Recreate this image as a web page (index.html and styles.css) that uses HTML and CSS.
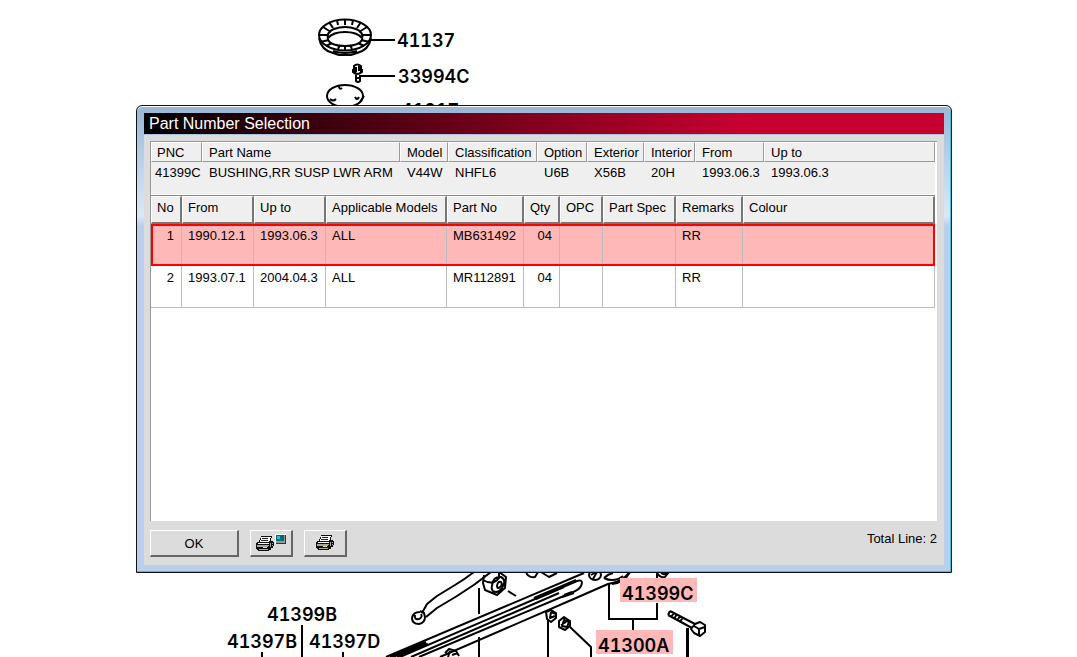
FILE: index.html
```html
<!DOCTYPE html>
<html lang="en">
<head>
<meta charset="utf-8">
<title>Part Number Selection</title>
<link rel="stylesheet" href="styles.css">
</head>
<body>
<svg class="diagram" width="1077" height="657" viewBox="0 0 1077 657" aria-label="Suspension parts diagram">
  <g class="ink">
    <!-- slotted ring -->
    <ellipse cx="345" cy="35" rx="26" ry="15.5"/>
    <path d="M328 40q-2-8 6-11 11-4 22 0 8 3 6 11-3 6-17 6t-17-6"/>
    <path d="M328 38q5-6 17-6t17 6M319 38q2 12 14 15l6 2h12l6-2q12-3 14-15M333 51q12 4 24 0"/>
    <path d="M345 20v5M337 20l1 5M353 20l-1 5M329 22l4 6M361 22l-4 6M323 27l8 5M367 27l-8 5M319 35h8M371 35h-8M320 42l9-2M370 42l-9-2M326 46l6-3M364 46l-6-3M338 49l2-4M352 49l-2-4M345 50v-4"/>
    <path class="fine" d="M371 40h24M360 76h35"/>
    <!-- screw -->
    <path d="M354 66q3-3 7 0v6q-3 4-7 0zM353 69v3q4 4 9 0v-3M356 75v6q2 2 4 0v-6M356 78h3M356 67v5M359 66v5"/>
    <!-- cover plate -->
    <ellipse cx="345" cy="96" rx="18" ry="11"/>
    <path d="M339 86q0 4 3 2M330 99q3 3 6 0M355 97q2 4 4 0M360 102l4-6"/>
    <!-- upper arm -->
    <path d="M474 572q-9 7-19 13l-18 11-10 8-5 9M491 572q-16 13-34 24l-20 12-11 9"/>
    <path d="M420 611l4 2 1 4q0 6-6 7-7 0-7-6 1-6 8-6M415 615q-1 5 4 4 4-2 2-5"/>
    <!-- arm bush -->
    <path d="M484 575l-1 8 2 7 12 5 8-7 1-11-7-5M483 580q10 6 16-2v-5M492 586q1-10 9-9 6 3 1 11-4 6-9 3-2-2-1-5M497 587q0-6 4-5 2 3-1 5-2 2-3 0M508 591l8 5"/>
    <path class="fine" d="M479 588v26M479 637v20"/>
    <!-- beam -->
    <path d="M386 657l198-84M400 657l177-76q7-2 4 5-2 4-10 7l-152 64M411 657l148-64M440 657l136-59 32-14q12-2 17-7l5-5M393 657l33-14"/>
    <path d="M390 657l36-15M397 657l30-13M403 654l25-10M534 598l42-18M536 599l28-12M540 596l20-8M562 597l12-4M564 595l8-3"/>
    <path d="M526 572q2 6 9 5l3-5M541 572l8 5 8-4"/>
    <ellipse cx="595" cy="575" rx="6" ry="5"/>
    <path d="M591 575l7-4M593 579l4-7M604 578q4-4 9-5M604 578q10 5 19-2M630 572q-6 11-18 12"/>
    <path d="M657 572q2 6 8 5l4-5M661 573q4 3 6-1"/>
    <!-- nuts -->
    <path d="M546 612l5-2 5 3v5l-5 4-4-3zM551 612l-1 6 5-2M551 612l5 2"/>
    <path d="M559 621l5-4 6 4v5l-5 4-6-3zM564 620l5 2-2 5-5-1zM561 625l5-3"/>
    <path class="fine" d="M548 620v37"/>
    <path d="M570 627l21 20v10"/>
    <path d="M445 653l4-4 7 2 3 5M448 657l2-6M452 655l6-2"/>
    <!-- leader bracket -->
    <path class="fine" d="M609 584v35h48v-16M633 619v12M657 572v7"/>
    <!-- bolt -->
    <path d="M670 611l25 13M668 615l24 13M670 611l-2 4M674 613l-3 4M677 614l-3 5M680 616l-3 5M683 617l-3 5M695 624l5-2 5 3v7l-5 4-6-3-3-4zM705 627l-6 2-5-3M699 629v7"/>
    <path class="lead" d="M687.500 628v29"/>
    <path class="fine" d="M302 625v32M262 652v5M343 652v5"/>
  </g>
  <g class="marks"><rect x="620" y="578" width="77" height="24"/><rect x="596" y="630" width="77" height="24"/></g>
  <g class="codes">
    <text x="397" y="47">41137</text>
    <text x="398" y="83">33994C</text>
    <text x="401" y="117">41217</text>
    <text x="267" y="621">41399B</text>
    <text x="227" y="648">41397B</text>
    <text x="309" y="648">41397D</text>
    <text x="622" y="600">41399C</text>
    <text x="598" y="652">41300A</text>
  </g>
</svg>

<main class="window">
  <div class="frame">
    <h1 class="title">Part Number Selection</h1>
    <div class="body">
      <div class="pane">
        <table class="summary">
          <colgroup><col class="w51"><col class="w198"><col class="w48"><col class="w89"><col class="w50"><col class="w57"><col class="w51"><col class="w69"><col></colgroup>
          <thead><tr><th>PNC</th><th>Part Name</th><th>Model</th><th>Classification</th><th>Option</th><th>Exterior</th><th>Interior</th><th>From</th><th>Up to</th></tr></thead>
          <tbody><tr><td>41399C</td><td>BUSHING,RR SUSP LWR ARM</td><td>V44W</td><td>NHFL6</td><td>U6B</td><td>X56B</td><td>20H</td><td>1993.06.3</td><td>1993.06.3</td></tr></tbody>
        </table>
        <table class="parts">
          <colgroup><col class="w31"><col class="w72"><col class="w72"><col class="w121"><col class="w77"><col class="w36"><col class="w43"><col class="w73"><col class="w67"><col></colgroup>
          <thead><tr><th>No</th><th>From</th><th>Up to</th><th>Applicable Models</th><th>Part No</th><th>Qty</th><th>OPC</th><th>Part Spec</th><th>Remarks</th><th>Colour</th></tr></thead>
          <tbody>
            <tr class="selected"><td class="num">1</td><td>1990.12.1</td><td>1993.06.3</td><td>ALL</td><td>MB631492</td><td class="num">04</td><td></td><td></td><td>RR</td><td></td></tr>
            <tr><td class="num">2</td><td>1993.07.1</td><td>2004.04.3</td><td>ALL</td><td>MR112891</td><td class="num">04</td><td></td><td></td><td>RR</td><td></td></tr>
          </tbody>
        </table>
      </div>
      <footer class="footer">
        <button class="btn ok" type="button">OK</button>
        <button class="btn" type="button" aria-label="Print screen">
          <svg width="32" height="20" viewBox="0 0 32 20">
            <use href="#printer" x="1" y="3"/>
            <g shape-rendering="crispEdges"><path d="M20 1h11v10H20z" fill="#fff"/><path d="M21 2h10v9H21z" fill="#333"/><path d="M21 2h9v8h-9z" fill="#999"/><path d="M21 2h8v6h-8z" fill="#006c70"/><path d="M22 3h3v3h-3z" fill="#20c8c8"/></g>
          </svg>
        </button>
        <button class="btn" type="button" aria-label="Print">
          <svg width="18" height="16" viewBox="0 0 18 16">
            <g id="printer" shape-rendering="crispEdges">
              <path d="M5 0h11v2h-1v3h2v1h1v4h-1v2h-2v2h-2v1H2v-1H1v-1H0V7h1V6h2V4h1V2h1z" fill="#111"/>
              <path d="M5 1h10v1h-1v3h-1v1H4V4h1z" fill="#fff"/>
              <path d="M6 2h6v1H6zM5 4h7v1H5z" fill="#222"/>
              <path d="M2 7h11v1H2z" fill="#fff"/>
              <path d="M1 9h12v1H1zM1 10h11v1H1zM3 13h9v1H3zM14 7h1v4h-1zM16 7h1v1h-1zM16 9h1v1h-1z" fill="#a8a8a8"/>
              <path d="M7 11h4v1H7z" fill="#ee0"/>
            </g>
          </svg>
        </button>
        <span class="total">Total Line: 2</span>
      </footer>
    </div>
  </div>
</main>
</body>
</html>
```

FILE: styles.css
```css
* { box-sizing: border-box; }
body {
  margin: 0;
  height: 100vh;
  overflow: hidden;
  background: #fff;
  color: #000;
  font: 13px/15px "Liberation Sans", Arial, sans-serif;
  display: flow-root;
}

.diagram { position: absolute; top: 0; left: 0; }
.ink { fill: none; stroke: #000; stroke-width: 2; stroke-linejoin: round; }
.ink .fine { shape-rendering: crispEdges; }
.ink .lead { stroke-width: 3; }
.marks { fill: #ffb8b8; }
.codes { font: 600 18px Inter, "Liberation Sans", sans-serif; font-variant-numeric: tabular-nums; }

.window {
  position: relative;
  margin: 105px 125px 0 136px;
  border: 1px solid #111;
  border-radius: 6px 6px 0 0;
  background: linear-gradient(#9bb5d3 0, #b9d1ea 55px, #dbe8f5 110px, #b9cfeb 120px, #b9cfeb 100%);
  box-shadow: inset 0 1px #fff, inset -1px -1px #34c4dc;
}
.frame { padding: 7px; }
.title {
  margin: 0;
  height: 21px;
  padding-left: 5px;
  font-size: 16px;
  line-height: 21px;
  font-weight: 400;
  color: #fff;
  background: linear-gradient(90deg, #000, #c8002f 75%);
}
.body {
  margin-top: 1px;
  padding: 6px 7px 8px 6px;
  background: #dcdcdc;
}
.pane {
  min-height: 380px;
  padding-right: 2px;
  background: #fff;
  border-top: 1px solid #999;
  border-left: 1px solid #999;
}

table { width: 100%; table-layout: fixed; border-collapse: separate; border-spacing: 0; }
th, td { padding: 0 0 0 6px; font-weight: 400; text-align: left; white-space: nowrap; }
.w31 { width: 31px; } .w36 { width: 36px; } .w43 { width: 43px; }
.w48 { width: 48px; } .w50 { width: 50px; } .w51 { width: 51px; }
.w57 { width: 57px; } .w67 { width: 67px; } .w69 { width: 69px; }
.w72 { width: 72px; } .w73 { width: 73px; } .w77 { width: 77px; }
.w89 { width: 89px; } .w121 { width: 121px; } .w198 { width: 198px; }

.summary { background: #efefef; border-bottom: 1px solid #fff; }
.summary th {
  height: 20px;
  border: solid;
  border-width: 1px;
  border-color: #fff #999 #999 #fff;
}
.summary td { height: 32px; padding: 3px 0 0 7px; vertical-align: top; }
.summary th:first-child { padding-left: 5px; }
.summary td:first-child { padding-left: 4px; }

.parts { border-top: 1px solid #888; }
.parts th {
  height: 28px;
  padding-left: 5px;
  padding-bottom: 4px;
  background: #efefef;
  border: solid;
  border-width: 1px 2px 2px 1px;
  border-color: #fff #777 #777 #fff;
}
.parts td {
  height: 42px;
  padding-top: 4px;
  vertical-align: top;
  border-right: 1px solid #bbb;
  border-bottom: 1px solid #bbb;
}
.parts .num { padding-left: 0; padding-right: 7px; text-align: right; }
.selected { background: #ffb8b8; outline: 2px solid #f00; outline-offset: -2px; }

.footer { display: flex; align-items: flex-start; gap: 11px; padding-top: 9px; }
.btn {
  width: 43px;
  height: 27px;
  padding: 0;
  display: flex;
  align-items: center;
  justify-content: center;
  font: inherit;
  color: #000;
  background: #dcdcdc;
  border: solid;
  border-width: 1px 2px 2px 1px;
  border-color: #fff #666 #666 #fff;
}
.ok { width: 89px; }
.total { margin-left: auto; padding-top: 1px; }
```
